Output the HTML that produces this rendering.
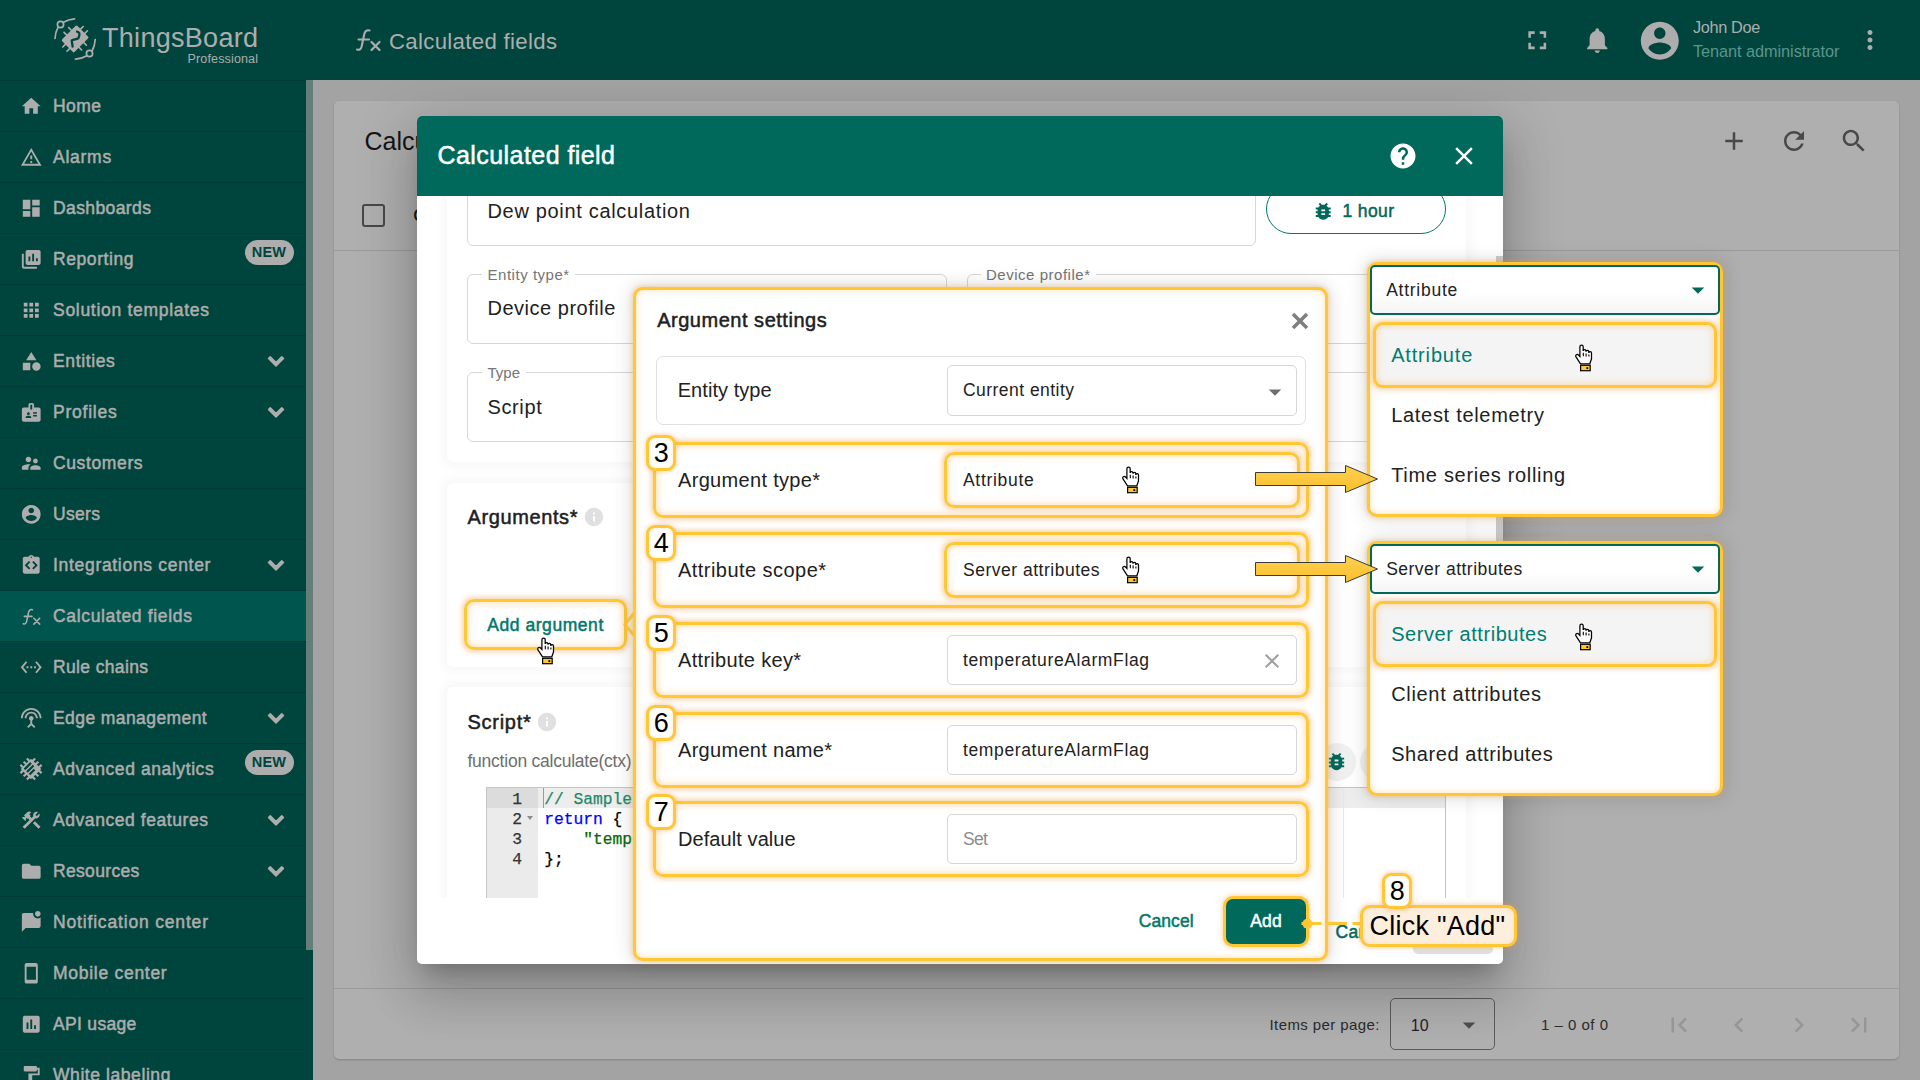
<!DOCTYPE html><html><head><meta charset="utf-8"><title>Calculated fields</title>
<style>
*{box-sizing:border-box;margin:0;padding:0}
html,body{width:1920px;height:1080px;overflow:hidden;background:#a3a3a3;font-family:"Liberation Sans",sans-serif;color:#212121}
.a{position:absolute}
.t{position:absolute;white-space:nowrap;line-height:40px}
.m{-webkit-text-stroke:.5px currentColor}
svg{position:absolute;display:block}
#top{left:0;top:0;width:1920px;height:80px;background:#00453d}
#side{left:0;top:80px;width:313px;height:1000px;background:#00453d;overflow:hidden}
.mi{position:absolute;left:0;width:306px;height:51px;border-top:1px solid #003c35}
.mi.act{background:#00554e}
.new{position:absolute;left:244.500px;top:5.600px;width:49px;height:25px;border-radius:13px;background:#adadad;color:#00453d;font-size:14.500px;font-weight:700;text-align:center;line-height:25.500px;letter-spacing:.2px}
#card{left:334px;top:101px;width:1565px;height:958px;background:#afafaf;border-radius:5px;box-shadow:0 1px 2px rgba(0,0,0,.2)}
#dlgsh{left:417px;top:116px;width:1086px;height:848px;border-radius:5px;box-shadow:0 14px 19px -9px rgba(0,0,0,.2),0 30px 48px 4px rgba(0,0,0,.14),0 11px 58px 10px rgba(0,0,0,.12)}
#dlg{left:417px;top:116px;width:1086px;height:848px;border-radius:5px;background:#fff;overflow:hidden}
#dh{left:0;top:0;width:1086px;height:80px;background:#00695c}
#dc{left:0;top:80px;width:1086px;height:702px;overflow:hidden;background:#fff}
.sec{position:absolute;left:30px;width:1019px;background:#fff;border-radius:6px;box-shadow:0 0 9px 6px rgba(0,0,0,.028)}
.of{position:absolute;border:1px solid #d6d6d6;border-radius:6px;background:#fff}
.lbl{position:absolute;white-space:nowrap;line-height:1;transform:translateY(-50%);font-size:15px;color:#757575;background:#fff;padding:0 6px}
.hl{position:absolute;border:3px solid #ffc733;border-radius:10px;box-shadow:0 0 5px 1.500px rgba(238,170,90,.5),inset 0 0 6px 1.500px rgba(255,194,115,.5)}
.badge{position:absolute;width:30px;height:36px;border:3px solid #ffc733;border-radius:9px;background:#fff;box-shadow:0 0 4px 1px rgba(232,165,85,.45),inset 0 0 3px rgba(255,194,115,.4)}
.badge span{position:absolute;left:0;width:24px;top:-5px;text-align:center;font-size:27px;line-height:40px;color:#000}

.panel{box-shadow:0 0 5px 1px rgba(232,165,85,.45),inset 0 0 6px 1px rgba(255,194,115,.42),0 0 18px 4px rgba(0,0,0,.10)}

</style></head><body>
<div class="a" id="top"></div>
<svg style="left:52px;top:16px;width:46px;height:46px" viewBox="0 0 46 46" fill="none" stroke="#adadad" stroke-width="1.700" stroke-linecap="round">
<path d="M3 22.500C3.300 18.500 4.300 14.500 5.900 11.700M11.500 6.200C14.500 4.300 18.500 3.100 22.500 2.800"></path>
<circle cx="8.500" cy="8.500" r="3.100"></circle>
<path d="M43.200 23.500C42.900 27.500 42 31.500 40.300 34.500M34.300 40C31.500 41.700 27.500 42.900 23.500 43.200"></path>
<circle cx="37.500" cy="37.500" r="3.100"></circle>
<g transform="rotate(45 23.100 22.900)" stroke-width="1.600">
<rect x="14.250" y="12.050" width="17.700" height="21.700" rx="1.500" fill="#adadad" stroke="none"></rect>
<path d="M10.600 19.400h3.700M10.600 26.100h3.700M31.900 19.400h3.700M31.900 26.100h3.700M20.100 8.400v3.700M26.100 8.400v3.700M20.100 33.700v3.700M26.100 33.700v3.700"></path>
</g>
<path d="M25 15.600C27 16 27.800 17.500 27.300 19.200C27 20.500 26.800 21.500 26.300 22.300C24.500 23.500 21.500 23.300 19.700 24.500C20 26.500 20.300 28.500 20.600 30.500" stroke="#00453d" stroke-width="2.300" stroke-linejoin="round"></path>
</svg>
<span class="t " style="left: 102px; top: 18px; font-size: 27px; color: rgb(173, 173, 173); letter-spacing: 0.291px;">ThingsBoard</span>
<span class="t " style="left: 187.5px; top: 39px; font-size: 12.5px; color: rgb(173, 173, 173); letter-spacing: 0.155px;">Professional</span>
<svg style="left:354px;top:27px;width:28px;height:26px" viewBox="0 0 28 26" fill="none" stroke="#adadad" stroke-width="2.100" stroke-linecap="round"><path d="M3 22.500c2.300.9 4-.3 4.700-3.200L10.300 7c.7-3 2.500-4.400 5.300-3.500M4.500 12.500h10.500"></path><path d="M17.500 15l8 8M25.500 15l-8 8" stroke-width="2.200"></path></svg>
<span class="t " style="left: 389px; top: 22px; font-size: 22.2px; color: rgb(173, 173, 173); letter-spacing: 0.324px;">Calculated fields</span>
<svg style="left:1522.15px;top:24.65px;width:30.5px;height:30.5px;fill:#adadad;" viewBox="0 0 24 24"><path d="M7 14H5v5h5v-2H7v-3zm-2-4h2V7h3V5H5v5zm12 7h-3v2h5v-5h-2v3zM14 5v2h3v3h2V5h-5z"></path></svg>
<svg style="left:1582.05px;top:25.05px;width:30.5px;height:30.5px;fill:#adadad;" viewBox="0 0 24 24"><path d="M12 22c1.100 0 2-.9 2-2h-4c0 1.100.89 2 2 2zm6-6v-5c0-3.070-1.640-5.640-4.500-6.320V4c0-.83-.67-1.500-1.500-1.500s-1.500.67-1.500 1.500v.68C7.630 5.360 6 7.920 6 11v5l-2 2v1h16v-1l-2-2z"></path></svg>
<svg style="left:1637.20px;top:17.70px;width:45.6px;height:45.6px;fill:#adadad;" viewBox="0 0 24 24"><path d="M12 2C6.48 2 2 6.48 2 12s4.48 10 10 10 10-4.48 10-10S17.52 2 12 2zm0 3c1.66 0 3 1.34 3 3s-1.34 3-3 3-3-1.34-3-3 1.34-3 3-3zm0 14.2c-2.5 0-4.71-1.28-6-3.22.03-1.99 4-3.080 6-3.080 1.99 0 5.97 1.09 6 3.080-1.290 1.940-3.5 3.220-6 3.220z"></path></svg>
<span class="t " style="left: 1693px; top: 7px; font-size: 16.3px; color: rgb(173, 173, 173); letter-spacing: -0.343px;">John Doe</span>
<span class="t " style="left: 1693px; top: 31px; font-size: 16.3px; color: rgb(91, 149, 140); letter-spacing: -0.053px;">Tenant administrator</span>
<svg style="left:1854.70px;top:25.20px;width:30px;height:30px;fill:#adadad;" viewBox="0 0 24 24"><path d="M12 8c1.100 0 2-.9 2-2s-.9-2-2-2-2 .9-2 2 .9 2 2 2zm0 2c-1.100 0-2 .9-2 2s.9 2 2 2 2-.9 2-2-.9-2-2-2zm0 6c-1.100 0-2 .9-2 2s.9 2 2 2 2-.9 2-2-.9-2-2-2z"></path></svg>
<div class="a" id="side">
<div class="mi" style="top:0px">
<svg style="left:19.95px;top:14.05px;width:22.5px;height:22.5px;fill:#adadad;" viewBox="0 0 24 24"><path d="M10 20v-6h4v6h5v-8h3L12 3 2 12h3v8z"></path></svg>
<span class="t m" style="left: 53px; top: 5px; font-size: 17.5px; color: rgb(173, 173, 173); letter-spacing: 0.438px;">Home</span>
</div>
<div class="mi" style="top:51px">
<svg style="left:19.95px;top:14.05px;width:22.5px;height:22.5px;fill:#adadad;" viewBox="0 0 24 24"><path d="M12 5.99L19.53 19H4.47L12 5.99M12 2L1 21h22L12 2zm1 14h-2v2h2v-2zm0-6h-2v4h2v-4z"></path></svg>
<span class="t m" style="left: 53px; top: 5px; font-size: 17.5px; color: rgb(173, 173, 173); letter-spacing: 0.749px;">Alarms</span>
</div>
<div class="mi" style="top:102px">
<svg style="left:19.95px;top:14.05px;width:22.5px;height:22.5px;fill:#adadad;" viewBox="0 0 24 24"><path d="M3 13h8V3H3v10zm0 8h8v-6H3v6zm10 0h8V11h-8v10zm0-18v6h8V3h-8z"></path></svg>
<span class="t m" style="left: 53px; top: 5px; font-size: 17.5px; color: rgb(173, 173, 173); letter-spacing: 0.403px;">Dashboards</span>
</div>
<div class="mi" style="top:153px">
<svg style="left:19.95px;top:14.05px;width:22.5px;height:22.5px;fill:#adadad;" viewBox="0 0 24 24"><path d="M4 6H2v14c0 1.1.9 2 2 2h14v-2H4V6zm16-4H8c-1.1 0-2 .9-2 2v12c0 1.1.9 2 2 2h12c1.1 0 2-.9 2-2V4c0-1.1-.9-2-2-2zm-9 12H9V9h2v5zm4 0h-2V6h2v8zm4 0h-2v-3h2v3z"></path></svg>
<span class="t m" style="left: 53px; top: 5px; font-size: 17.5px; color: rgb(173, 173, 173); letter-spacing: 0.589px;">Reporting</span>
<div class="new"><span>NEW</span></div>
</div>
<div class="mi" style="top:204px">
<svg style="left:19.95px;top:14.05px;width:22.5px;height:22.5px;fill:#adadad;" viewBox="0 0 24 24"><path d="M4 8h4V4H4v4zm6 12h4v-4h-4v4zm-6 0h4v-4H4v4zm0-6h4v-4H4v4zm6 0h4v-4h-4v4zm6-10v4h4V4h-4zm-6 4h4V4h-4v4zm6 6h4v-4h-4v4zm0 6h4v-4h-4v4z"></path></svg>
<span class="t m" style="left: 53px; top: 5px; font-size: 17.5px; color: rgb(173, 173, 173); letter-spacing: 0.707px;">Solution templates</span>
</div>
<div class="mi" style="top:255px">
<svg style="left:19.95px;top:14.05px;width:22.5px;height:22.5px;fill:#adadad;" viewBox="0 0 24 24"><path d="M12 2l-5.5 9h11L12 2zm5.5 11c-2.49 0-4.5 2.01-4.5 4.5s2.01 4.5 4.5 4.5 4.5-2.01 4.5-4.5-2.01-4.5-4.5-4.5zM3 21.5h8v-8H3v8z"></path></svg>
<span class="t m" style="left: 53px; top: 5px; font-size: 17.5px; color: rgb(173, 173, 173); letter-spacing: 0.63px;">Entities</span>
<svg style="left:261.00px;top:10.10px;width:30px;height:30px;fill:#adadad;stroke:#adadad;stroke-width:1.2;stroke-linejoin:round" viewBox="0 0 24 24"><path d="M16.590 8.590L12 13.170 7.410 8.590 6 10l6 6 6-6z"></path></svg>
</div>
<div class="mi" style="top:306px">
<svg style="left:19.95px;top:14.05px;width:22.5px;height:22.5px;fill:#adadad;" viewBox="0 0 24 24"><path d="M20 7h-5V4c0-1.1-.9-2-2-2h-2c-1.1 0-2 .9-2 2v3H4c-1.1 0-2 .9-2 2v11c0 1.1.9 2 2 2h16c1.1 0 2-.9 2-2V9c0-1.1-.9-2-2-2zM9 12c.83 0 1.5.67 1.5 1.5S9.83 15 9 15s-1.5-.67-1.5-1.5S8.17 12 9 12zm3 6H6v-.75c0-1 2-1.5 3-1.5s3 .5 3 1.5V18zm1-9h-2V4h2v5zm5 7.5h-4V15h4v1.5zm0-3h-4V12h4v1.5z"></path></svg>
<span class="t m" style="left: 53px; top: 5px; font-size: 17.5px; color: rgb(173, 173, 173); letter-spacing: 0.763px;">Profiles</span>
<svg style="left:261.00px;top:10.10px;width:30px;height:30px;fill:#adadad;stroke:#adadad;stroke-width:1.2;stroke-linejoin:round" viewBox="0 0 24 24"><path d="M16.590 8.590L12 13.170 7.410 8.590 6 10l6 6 6-6z"></path></svg>
</div>
<div class="mi" style="top:357px">
<svg style="left:19.95px;top:14.05px;width:22.5px;height:22.5px;fill:#adadad;" viewBox="0 0 24 24"><path d="M16.5 12c1.38 0 2.49-1.12 2.49-2.5S17.880 7 16.5 7C15.12 7 14 8.12 14 9.5s1.120 2.5 2.5 2.5zM9 11c1.66 0 2.99-1.34 2.99-3S10.660 5 9 5C7.34 5 6 6.34 6 8s1.34 3 3 3zm7.5 3c-1.830 0-5.500.92-5.500 2.75V19h11v-2.250c0-1.830-3.670-2.750-5.5-2.750zM9 13c-2.33 0-7 1.17-7 3.5V19h7v-2.25c0-.85.33-2.34 2.370-3.470C10.5 13.1 9.66 13 9 13z"></path></svg>
<span class="t m" style="left: 53px; top: 5px; font-size: 17.5px; color: rgb(173, 173, 173); letter-spacing: 0.624px;">Customers</span>
</div>
<div class="mi" style="top:408px">
<svg style="left:19.95px;top:14.05px;width:22.5px;height:22.5px;fill:#adadad;" viewBox="0 0 24 24"><path d="M12 2C6.48 2 2 6.48 2 12s4.48 10 10 10 10-4.48 10-10S17.52 2 12 2zm0 3c1.66 0 3 1.34 3 3s-1.34 3-3 3-3-1.34-3-3 1.34-3 3-3zm0 14.2c-2.5 0-4.71-1.28-6-3.22.03-1.99 4-3.080 6-3.080 1.99 0 5.97 1.09 6 3.080-1.290 1.940-3.5 3.220-6 3.220z"></path></svg>
<span class="t m" style="left: 53px; top: 5px; font-size: 17.5px; color: rgb(173, 173, 173); letter-spacing: 0.324px;">Users</span>
</div>
<div class="mi" style="top:459px">
<svg style="left:19.95px;top:14.05px;width:22.5px;height:22.5px;fill:#adadad;" viewBox="0 0 24 24"><path d="M19 3h-4.180C14.4 1.84 13.3 1 12 1s-2.4.84-2.820 2H5c-1.100 0-2 .9-2 2v14c0 1.100.9 2 2 2h14c1.100 0 2-.9 2-2V5c0-1.100-.9-2-2-2zm-7-.25c.41 0 .75.34.75.75s-.34.75-.75.75-.75-.34-.75-.75.34-.75.75-.75zM11 15.170l-1.410 1.420L5 12l4.590-4.590L11 8.830 7.830 12 11 15.170zm3.410 1.420L13 15.170 16.170 12 13 8.830l1.410-1.420L19 12l-4.590 4.590z"></path></svg>
<span class="t m" style="left: 53px; top: 5px; font-size: 17.5px; color: rgb(173, 173, 173); letter-spacing: 0.691px;">Integrations center</span>
<svg style="left:261.00px;top:10.10px;width:30px;height:30px;fill:#adadad;stroke:#adadad;stroke-width:1.2;stroke-linejoin:round" viewBox="0 0 24 24"><path d="M16.590 8.590L12 13.170 7.410 8.590 6 10l6 6 6-6z"></path></svg>
</div>
<div class="mi act" style="top:510px">
<svg style="left:20.800px;top:15.500px;width:20.500px;height:19.500px" viewBox="0 0 28 26" fill="none" stroke="#adadad" stroke-width="2.100" stroke-linecap="round"><path d="M3 22.500c2.300.9 4-.3 4.700-3.200L10.300 7c.7-3 2.500-4.400 5.300-3.500M4.500 12.500h10.500"></path><path d="M17.500 15l8 8M25.500 15l-8 8" stroke-width="2.200"></path></svg>
<span class="t m" style="left: 53px; top: 5px; font-size: 17.5px; color: rgb(173, 173, 173); letter-spacing: 0.656px;">Calculated fields</span>
</div>
<div class="mi" style="top:561px">
<svg style="left:19.95px;top:14.05px;width:22.5px;height:22.5px;fill:#adadad;" viewBox="0 0 24 24"><path d="M7.770 6.760L6.230 5.480.82 12l5.410 6.520 1.540-1.280L3.420 12l4.350-5.240zM7 13h2v-2H7v2zm10-2h-2v2h2v-2zm-6 2h2v-2h-2v2zm6.770-7.520l-1.540 1.280L20.580 12l-4.350 5.240 1.540 1.280L23.180 12l-5.410-6.520z"></path></svg>
<span class="t m" style="left: 53px; top: 5px; font-size: 17.5px; color: rgb(173, 173, 173); letter-spacing: 0.355px;">Rule chains</span>
</div>
<div class="mi" style="top:612px">
<svg style="left:19.95px;top:14.05px;width:22.5px;height:22.5px;fill:#adadad;" viewBox="0 0 24 24"><path d="M12 5c-3.870 0-7 3.130-7 7h2c0-2.760 2.240-5 5-5s5 2.240 5 5h2c0-3.870-3.130-7-7-7zm1 9.290c.88-.39 1.500-1.260 1.500-2.290 0-1.380-1.120-2.500-2.500-2.500S9.500 10.620 9.500 12c0 1.020.62 1.900 1.500 2.290v3.300L7.590 21 9 22.410l3-3 3 3L16.410 21 13 17.590v-3.300zM12 1C5.930 1 1 5.930 1 12h2c0-4.970 4.030-9 9-9s9 4.030 9 9h2c0-6.070-4.930-11-11-11z"></path></svg>
<span class="t m" style="left: 53px; top: 5px; font-size: 17.5px; color: rgb(173, 173, 173); letter-spacing: 0.415px;">Edge management</span>
<svg style="left:261.00px;top:10.10px;width:30px;height:30px;fill:#adadad;stroke:#adadad;stroke-width:1.2;stroke-linejoin:round" viewBox="0 0 24 24"><path d="M16.590 8.590L12 13.170 7.410 8.590 6 10l6 6 6-6z"></path></svg>
</div>
<div class="mi" style="top:663px">
<svg style="left:18.100px;top:12px;width:26px;height:26px" viewBox="0 0 24 24" fill="none" stroke="#adadad" stroke-width="2">
<g transform="rotate(45 12 12)"><rect x="5.300" y="5.300" width="13.400" height="13.400" rx=".6" fill="#adadad" stroke="none"></rect>
<path d="M7.800 2.400v3.500M12 2.400v3.500M16.200 2.400v3.500M7.800 18.100v3.500M12 18.100v3.500M16.200 18.100v3.500M2.400 7.800h3.500M2.400 12h3.500M2.400 16.200h3.500M18.100 7.800h3.500M18.100 12h3.500M18.100 16.200h3.500"></path>
<path d="M8 8v8.500M11.300 8v8.500M14.600 10v6.500" stroke="#00453d" stroke-width="2"></path></g></svg>
<span class="t m" style="left: 53px; top: 5px; font-size: 17.5px; color: rgb(173, 173, 173); letter-spacing: 0.583px;">Advanced analytics</span>
<div class="new"><span>NEW</span></div>
</div>
<div class="mi" style="top:714px">
<svg style="left:19.95px;top:14.05px;width:22.5px;height:22.5px;fill:#adadad;" viewBox="0 0 24 24"><path d="M13.783 15.172l2.121-2.121 5.996 5.996-2.121 2.121zM17.5 10c1.930 0 3.500-1.570 3.500-3.500 0-.58-.16-1.120-.41-1.600l-2.700 2.700-1.490-1.490 2.700-2.700c-.48-.25-1.020-.41-1.600-.41C15.570 3 14 4.570 14 6.500c0 .41.08.8.21 1.160l-1.850 1.850-1.780-1.780.71-.71-1.410-1.410L12 3.490c-1.170-1.170-3.070-1.170-4.240 0L4.220 7.030l1.410 1.410H2.810l-.71.71 3.540 3.540.71-.71V9.150l1.410 1.410.71-.71 1.780 1.780-7.410 7.410 2.120 2.120L16.340 9.790c.36.130.75.210 1.160.210z"></path></svg>
<span class="t m" style="left: 53px; top: 5px; font-size: 17.5px; color: rgb(173, 173, 173); letter-spacing: 0.566px;">Advanced features</span>
<svg style="left:261.00px;top:10.10px;width:30px;height:30px;fill:#adadad;stroke:#adadad;stroke-width:1.2;stroke-linejoin:round" viewBox="0 0 24 24"><path d="M16.590 8.590L12 13.170 7.410 8.590 6 10l6 6 6-6z"></path></svg>
</div>
<div class="mi" style="top:765px">
<svg style="left:19.95px;top:14.05px;width:22.5px;height:22.5px;fill:#adadad;" viewBox="0 0 24 24"><path d="M10 4H4c-1.100 0-1.990.9-1.990 2L2 18c0 1.100.9 2 2 2h16c1.100 0 2-.9 2-2V8c0-1.100-.9-2-2-2h-8l-2-2z"></path></svg>
<span class="t m" style="left: 53px; top: 5px; font-size: 17.5px; color: rgb(173, 173, 173); letter-spacing: 0.33px;">Resources</span>
<svg style="left:261.00px;top:10.10px;width:30px;height:30px;fill:#adadad;stroke:#adadad;stroke-width:1.2;stroke-linejoin:round" viewBox="0 0 24 24"><path d="M16.590 8.590L12 13.170 7.410 8.590 6 10l6 6 6-6z"></path></svg>
</div>
<div class="mi" style="top:816px">
<svg style="left:19.95px;top:14.05px;width:22.5px;height:22.5px;fill:#adadad;" viewBox="0 0 24 24"><path d="M22 6.980V16c0 1.100-.9 2-2 2H6l-4 4V4c0-1.100.9-2 2-2h10.100c-.06.32-.1.66-.1 1 0 2.760 2.240 5 5 5 1.130 0 2.160-.39 3-1.020zM16 3c0 1.660 1.340 3 3 3s3-1.340 3-3-1.340-3-3-3-3 1.340-3 3z"></path></svg>
<span class="t m" style="left: 53px; top: 5px; font-size: 17.5px; color: rgb(173, 173, 173); letter-spacing: 0.829px;">Notification center</span>
</div>
<div class="mi" style="top:867px">
<svg style="left:19.95px;top:14.05px;width:22.5px;height:22.5px;fill:#adadad;" viewBox="0 0 24 24"><path d="M17 1.010L7 1c-1.100 0-2 .9-2 2v18c0 1.100.9 2 2 2h10c1.100 0 2-.9 2-2V3c0-1.100-.9-1.990-2-1.990zM17 19H7V5h10v14z"></path></svg>
<span class="t m" style="left: 53px; top: 5px; font-size: 17.5px; color: rgb(173, 173, 173); letter-spacing: 0.72px;">Mobile center</span>
</div>
<div class="mi" style="top:918px">
<svg style="left:19.95px;top:14.05px;width:22.5px;height:22.5px;fill:#adadad;" viewBox="0 0 24 24"><path d="M19 3H5c-1.100 0-2 .9-2 2v14c0 1.100.9 2 2 2h14c1.100 0 2-.9 2-2V5c0-1.100-.9-2-2-2zM9 17H7v-7h2v7zm4 0h-2V7h2v10zm4 0h-2v-4h2v4z"></path></svg>
<span class="t m" style="left: 53px; top: 5px; font-size: 17.5px; color: rgb(173, 173, 173); letter-spacing: 0.319px;">API usage</span>
</div>
<div class="mi" style="top:969px">
<svg style="left:19.95px;top:14.05px;width:22.5px;height:22.5px;fill:#adadad;" viewBox="0 0 24 24"><path d="M18 4V3c0-.55-.45-1-1-1H5c-.55 0-1 .45-1 1v4c0 .55.45 1 1 1h12c.55 0 1-.45 1-1V6h1v4H9v11c0 .55.45 1 1 1h2c.55 0 1-.45 1-1v-9h8V4h-3z"></path></svg>
<span class="t m" style="left: 53px; top: 5px; font-size: 17.5px; color: rgb(173, 173, 173); letter-spacing: 0.575px;">White labeling</span>
</div>
<div class="a" style="left:306px;top:0;width:7px;height:870px;background:#667e7a"></div>
</div>
<div class="a" id="card"></div>
<span class="t " style="left:364.5px;top:121px;font-size:25px;color:#141414;">Calcu</span>
<div class="a" style="left:362px;top:204px;width:23px;height:23px;border:2.500px solid #484848;border-radius:3px"></div>
<span class="t m" style="left:413.5px;top:196px;font-size:16px;color:#141414;">C</span>
<div class="a" style="left:334px;top:250px;width:1565px;height:1px;background:#9a9a9a"></div>
<svg style="left:1719.20px;top:126.00px;width:30px;height:30px;fill:#484848;" viewBox="0 0 24 24"><path d="M19 13h-6v6h-2v-6H5v-2h6V5h2v6h6v2z"></path></svg>
<svg style="left:1779.00px;top:126.00px;width:30px;height:30px;fill:#484848;" viewBox="0 0 24 24"><path d="M17.650 6.350C16.200 4.900 14.210 4 12 4c-4.420 0-7.990 3.580-7.990 8s3.570 8 7.990 8c3.730 0 6.840-2.550 7.730-6h-2.080c-.82 2.330-3.040 4-5.650 4-3.310 0-6-2.690-6-6s2.690-6 6-6c1.660 0 3.140.69 4.220 1.780L13 11h7V4l-2.350 2.350z"></path></svg>
<svg style="left:1839.00px;top:126.00px;width:30px;height:30px;fill:#484848;" viewBox="0 0 24 24"><path d="M15.500 14h-.79l-.28-.27C15.410 12.590 16 11.110 16 9.500 16 5.910 13.090 3 9.500 3S3 5.910 3 9.500 5.910 16 9.500 16c1.610 0 3.090-.59 4.230-1.570l.27.28v.79l5 4.990L20.490 19l-4.990-5zm-6 0C7.010 14 5 11.990 5 9.500S7.010 5 9.500 5 14 7.010 14 9.500 11.990 14 9.500 14z"></path></svg>
<div class="a" style="left:334px;top:988px;width:1565px;height:1px;background:#9a9a9a"></div>
<span class="t " style="left: 1269.5px; top: 1005px; font-size: 15px; color: rgb(43, 43, 43); letter-spacing: 0.412px;">Items per page:</span>
<div class="a" style="left:1390px;top:998px;width:105px;height:52px;border:1px solid #5c5c5c;border-radius:5px"></div>
<span class="t " style="left:1410.8px;top:1006px;font-size:16px;color:#1f1f1f;">10</span>
<svg style="left:1454.00px;top:1010.00px;width:30px;height:30px;fill:#4e4e4e;" viewBox="0 0 24 24"><path d="M7 10l5 5 5-5z"></path></svg>
<span class="t " style="left: 1541px; top: 1005px; font-size: 15px; color: rgb(43, 43, 43); letter-spacing: 0.493px;">1 – 0 of 0</span>
<svg style="left:1664.00px;top:1009.50px;width:30px;height:30px;fill:#969696;" viewBox="0 0 24 24"><path d="M18.410 16.590L13.820 12l4.590-4.590L17 6l-6 6 6 6zM6 6h2v12H6z"></path></svg>
<svg style="left:1724.30px;top:1009.50px;width:30px;height:30px;fill:#969696;" viewBox="0 0 24 24"><path d="M15.410 7.410L14 6l-6 6 6 6 1.410-1.410L10.830 12z"></path></svg>
<svg style="left:1783.80px;top:1009.50px;width:30px;height:30px;fill:#969696;" viewBox="0 0 24 24"><path d="M10 6L8.590 7.410 13.170 12l-4.580 4.590L10 18l6-6z"></path></svg>
<svg style="left:1843.60px;top:1009.50px;width:30px;height:30px;fill:#969696;" viewBox="0 0 24 24"><path d="M5.590 7.410L10.180 12l-4.590 4.590L7 18l6-6-6-6zM16 6h2v12h-2z"></path></svg>
<div class="a" id="dlgsh"></div>
<div class="a" id="dlg"><div class="a" style="left:-417px;top:-116px;width:1920px;height:1080px">
<div class="a" style="left:417px;top:196px;width:1086px;height:702px;overflow:hidden;background:#fff"><div class="a" style="left:-417px;top:-196px;width:1920px;height:1080px">
<div class="sec" style="left:447px;top:150px;width:1019px;height:312px"></div>
<div class="sec" style="left:447px;top:482.500px;width:1019px;height:184.500px"></div>
<div class="sec" style="left:447px;top:687px;width:1019px;height:260px"></div>
<div class="of" style="left:467px;top:177px;width:789px;height:68.700px"></div>
<span class="t " style="left: 487.5px; top: 191px; font-size: 20px; color: rgb(33, 33, 33); letter-spacing: 0.675px;">Dew point calculation</span>
<div class="a" style="left:1266px;top:183.500px;width:180px;height:50px;border:1px solid #00796b;border-radius:25px"></div>
<svg style="left:1311.75px;top:199.75px;width:22.5px;height:22.5px;fill:#00695c;" viewBox="0 0 24 24"><path d="M20 8h-2.810c-.45-.78-1.070-1.450-1.820-1.960L17 4.410 15.590 3l-2.170 2.170C12.960 5.060 12.490 5 12 5c-.49 0-.96.06-1.410.17L8.410 3 7 4.410l1.620 1.630C7.880 6.550 7.260 7.220 6.810 8H4v2h2.090c-.05.33-.09.66-.09 1v1H4v2h2v1c0 .34.04.67.09 1H4v2h2.810c1.040 1.790 2.970 3 5.190 3s4.150-1.210 5.190-3H20v-2h-2.090c.05-.33.09-.66.09-1v-1h2v-2h-2v-1c0-.34-.04-.67-.09-1H20V8zm-6 8h-4v-2h4v2zm0-4h-4v-2h4v2z"></path></svg>
<span class="t m" style="left: 1342.4px; top: 191px; font-size: 17.5px; color: rgb(0, 105, 92); letter-spacing: 0.395px;">1 hour</span>
<div class="of" style="left:467px;top:273.700px;width:480px;height:70px"></div>
<div class="a" style="left:482px;top:270px;width:92.500px;height:10px;background:#fff"></div>
<span class="t " style="left: 487.5px; top: 255px; font-size: 15px; color: rgb(117, 117, 117); letter-spacing: 0.53px;">Entity type*</span>
<span class="t " style="left: 487.5px; top: 288px; font-size: 20px; color: rgb(33, 33, 33); letter-spacing: 0.51px;">Device profile</span>
<div class="of" style="left:967px;top:273.700px;width:479px;height:70px"></div>
<div class="a" style="left:981px;top:270px;width:115px;height:10px;background:#fff"></div>
<span class="t " style="left: 986px; top: 255px; font-size: 15px; color: rgb(117, 117, 117); letter-spacing: 0.52px;">Device profile*</span>
<div class="of" style="left:467px;top:372px;width:979px;height:69.500px"></div>
<div class="a" style="left:482px;top:368px;width:44px;height:10px;background:#fff"></div>
<span class="t " style="left: 487.5px; top: 353px; font-size: 15px; color: rgb(117, 117, 117); letter-spacing: -0.01px;">Type</span>
<span class="t " style="left: 487.5px; top: 387px; font-size: 20px; color: rgb(33, 33, 33); letter-spacing: 0.615px;">Script</span>
<span class="t m" style="left: 467.5px; top: 497px; font-size: 20px; color: rgb(33, 33, 33); letter-spacing: 0.611px;">Arguments*</span>
<svg style="left:583.20px;top:505.70px;width:22px;height:22px;fill:#e0e0e0;" viewBox="0 0 24 24"><path d="M12 2C6.480 2 2 6.480 2 12s4.480 10 10 10 10-4.480 10-10S17.520 2 12 2zm1 15h-2v-6h2v6zm0-8h-2V7h2v2z"></path></svg>
<span class="t m" style="left: 487.2px; top: 605px; font-size: 17.5px; color: rgb(0, 121, 107); letter-spacing: 0.56px;">Add argument</span>
<span class="t m" style="left: 467.5px; top: 702px; font-size: 20px; color: rgb(33, 33, 33); letter-spacing: 0.732px;">Script*</span>
<svg style="left:536.20px;top:710.70px;width:22px;height:22px;fill:#e0e0e0;" viewBox="0 0 24 24"><path d="M12 2C6.480 2 2 6.480 2 12s4.480 10 10 10 10-4.480 10-10S17.520 2 12 2zm1 15h-2v-6h2v6zm0-8h-2V7h2v2z"></path></svg>
<span class="t " style="left: 467.5px; top: 741px; font-size: 17.5px; color: rgb(110, 110, 110); letter-spacing: -0.239px;">function calculate(ctx)</span>
<div class="a" style="left:1317.500px;top:742.500px;width:38px;height:38px;border-radius:19px;background:#f1f1f1"></div>
<svg style="left:1325.00px;top:750.00px;width:23px;height:23px;fill:#00695c;" viewBox="0 0 24 24"><path d="M20 8h-2.810c-.45-.78-1.070-1.450-1.820-1.960L17 4.410 15.590 3l-2.170 2.170C12.960 5.060 12.490 5 12 5c-.49 0-.96.06-1.410.17L8.410 3 7 4.410l1.620 1.630C7.880 6.550 7.260 7.220 6.810 8H4v2h2.090c-.05.33-.09.66-.09 1v1H4v2h2v1c0 .34.04.67.09 1H4v2h2.810c1.040 1.790 2.970 3 5.190 3s4.150-1.210 5.190-3H20v-2h-2.090c.05-.33.09-.66.09-1v-1h2v-2h-2v-1c0-.34-.04-.67-.09-1H20V8zm-6 8h-4v-2h4v2zm0-4h-4v-2h4v2z"></path></svg>
<div class="a" style="left:1360px;top:742.500px;width:38px;height:38px;border-radius:19px;background:#f1f1f1"></div>
<div class="a" style="left:486px;top:787px;width:960px;height:200px;border:1px solid #c4c4c4;background:#fff"></div>
<div class="a" style="left:487px;top:788px;width:51px;height:199px;background:#ebebeb"></div>
<div class="a" style="left:487px;top:788px;width:51px;height:20px;background:#dcdcdc"></div>
<div class="a" style="left:538px;top:788px;width:907px;height:20px;background:#ededed"></div>
<div class="a" style="left:543px;top:788px;width:1px;height:20px;background:#9a9a9a"></div>
<div class="a" style="left:1343px;top:788px;width:1px;height:199px;background:#e8e8e8"></div>
<span class="t " style="left:487px;top:780px;font-size:16.3px;color:#333;width:35px;text-align:right;-webkit-text-stroke:.25px #333;font-family:'Liberation Mono',monospace;">1</span>
<span class="t " style="left:544.2px;top:780px;font-size:16.3px;color:#000;white-space:pre;-webkit-text-stroke:.25px;font-family:'Liberation Mono',monospace;"><span style="color:#1d8a68">// Sample script</span></span>
<span class="t " style="left:487px;top:800px;font-size:16.3px;color:#333;width:35px;text-align:right;-webkit-text-stroke:.25px #333;font-family:'Liberation Mono',monospace;">2</span>
<span class="t " style="left:544.2px;top:800px;font-size:16.3px;color:#000;white-space:pre;-webkit-text-stroke:.25px;font-family:'Liberation Mono',monospace;"><span style="color:#0000ff">return</span> {</span>
<span class="t " style="left:487px;top:820px;font-size:16.3px;color:#333;width:35px;text-align:right;-webkit-text-stroke:.25px #333;font-family:'Liberation Mono',monospace;">3</span>
<span class="t " style="left:544.2px;top:820px;font-size:16.3px;color:#000;white-space:pre;-webkit-text-stroke:.25px;font-family:'Liberation Mono',monospace;">    <span style="color:#036a07">"temperature"</span></span>
<span class="t " style="left:487px;top:840px;font-size:16.3px;color:#333;width:35px;text-align:right;-webkit-text-stroke:.25px #333;font-family:'Liberation Mono',monospace;">4</span>
<span class="t " style="left:544.2px;top:840px;font-size:16.3px;color:#000;white-space:pre;-webkit-text-stroke:.25px;font-family:'Liberation Mono',monospace;">};</span>
<svg style="left:527px;top:816px;width:6px;height:4px;fill:#8c8c8c" viewBox="0 0 6 4"><path d="M0 0h6L3 4z"></path></svg>
</div></div>
<div class="a" style="left:417px;top:116px;width:1086px;height:80px;background:#00695c"></div>
<span class="t m" style="left: 437.5px; top: 135px; font-size: 25px; color: rgb(255, 255, 255); letter-spacing: 0.438px;">Calculated field</span>
<svg style="left:1388.20px;top:140.80px;width:30px;height:30px;fill:#fff;" viewBox="0 0 24 24"><path d="M12 2C6.480 2 2 6.480 2 12s4.480 10 10 10 10-4.480 10-10S17.520 2 12 2zm1 17h-2v-2h2v2zm2.070-7.750l-.9.92C13.450 12.900 13 13.500 13 15h-2v-.5c0-1.100.45-2.100 1.170-2.830l1.240-1.260c.37-.36.590-.86.590-1.410 0-1.100-.9-2-2-2s-2 .9-2 2H8c0-2.210 1.790-4 4-4s4 1.790 4 4c0 .88-.36 1.680-.93 2.250z"></path></svg>
<svg style="left:1448.60px;top:141.00px;width:30px;height:30px;fill:#fff;" viewBox="0 0 24 24"><path d="M19 6.410L17.590 5 12 10.590 6.410 5 5 6.410 10.590 12 5 17.590 6.410 19 12 13.410 17.590 19 19 17.590 13.410 12z"></path></svg>
<div class="a" style="left:1496px;top:256px;width:7px;height:440px;background:#cdcdcd"></div>
<span class="t m" style="left: 1335.5px; top: 912px; font-size: 17.5px; color: rgb(0, 105, 92); letter-spacing: 0.303px;">Cancel</span>
<div class="a" style="left:1413.400px;top:908px;width:79.600px;height:45.700px;border-radius:5px;background:#e0e0e0"></div>
</div></div>
<div class="hl " style="left:464.2px;top:599.2px;width:163.00px;height:50.80px;border-radius:10px;"></div>
<svg style="left:620px;top:604px;width:18px;height:42px" viewBox="0 0 18 42"><path d="M15.800 7L4.800 20.500L15.800 33.500" fill="#fdebd2" stroke="#ffc733" stroke-width="3" stroke-linejoin="round" opacity=".85"></path></svg>
<svg style="left:536.5px;top:636.5px;width:18px;height:28px" viewBox="0 0 18 28">
<path d="M6.600 1c-1 0-1.700.75-1.700 1.700v9.800l-1.400-1.500c-.7-.7-1.700-.75-2.350-.1-.6.65-.5 1.500 0 2.250l4.350 6.650h9.300l1.700-4.800v-6.100c0-.8-.6-1.350-1.350-1.350s-1.350.55-1.350 1.350v-1.100c0-.8-.6-1.350-1.400-1.350s-1.400.55-1.400 1.350v-.9c0-.8-.6-1.350-1.400-1.350s-1.400.55-1.400 1.350V2.700c0-.95-.7-1.700-1.600-1.700z" fill="#fff" stroke="#000" stroke-width="1.250"></path>
<path d="M8.300 8.800v3.400M11.100 9.500v2.900M13.900 10.500v2" stroke="#000" stroke-width="1.100" fill="none"></path>
<rect x="5.600" y="21.300" width="9.600" height="5.400" fill="#ffc733" stroke="#000" stroke-width="1.200"></rect>
<rect x="11.400" y="23.200" width="1.800" height="1.800" fill="#000"></rect></svg>
<div class="hl panel" style="left:633.2px;top:287.2px;width:695.00px;height:674.30px;border-radius:10px;background:#fff;"></div>
<span class="t m" style="left: 657.2px; top: 300px; font-size: 20px; color: rgb(33, 33, 33); letter-spacing: 0.519px;">Argument settings</span>
<svg style="left:1291px;top:312px;width:18px;height:18px" viewBox="0 0 18 18"><path d="M2 2L16 16M16 2L2 16" stroke="#808080" stroke-width="3.600" fill="none"></path></svg>
<div class="of" style="left:656.300px;top:355.500px;width:649.500px;height:69px;border-color:#e0e0e0;border-radius:7px"></div>
<span class="t " style="left: 677.7px; top: 370px; font-size: 20px; color: rgb(33, 33, 33); letter-spacing: 0.061px;">Entity type</span>
<div class="of" style="left:947px;top:365px;width:350px;height:51px;border-radius:5px"></div>
<span class="t " style="left: 963px; top: 370px; font-size: 17.5px; color: rgb(33, 33, 33); letter-spacing: 0.458px;">Current entity</span>
<svg style="left:1260.00px;top:376.50px;width:30px;height:30px;fill:#6e6e6e;" viewBox="0 0 24 24"><path d="M7 10l5 5 5-5z"></path></svg>
<div class="hl " style="left:653.1px;top:441.9px;width:655.65px;height:76.20px;border-radius:10px;"></div>
<span class="t " style="left: 678px; top: 460px; font-size: 20px; color: rgb(33, 33, 33); letter-spacing: 0.319px;">Argument type*</span>
<div class="hl " style="left:944.2px;top:452.0px;width:355.80px;height:56.00px;border-radius:10px;"></div>
<span class="t " style="left: 963px; top: 460px; font-size: 17.5px; color: rgb(33, 33, 33); letter-spacing: 0.702px;">Attribute</span>
<div class="badge" style="left:646.2px;top:435.0px"><span>3</span></div>
<svg style="left:1122px;top:466.4px;width:18px;height:28px" viewBox="0 0 18 28">
<path d="M6.600 1c-1 0-1.700.75-1.700 1.700v9.800l-1.400-1.500c-.7-.7-1.700-.75-2.350-.1-.6.65-.5 1.500 0 2.250l4.350 6.650h9.300l1.700-4.800v-6.100c0-.8-.6-1.350-1.350-1.350s-1.350.55-1.350 1.350v-1.100c0-.8-.6-1.350-1.400-1.350s-1.400.55-1.400 1.350v-.9c0-.8-.6-1.350-1.400-1.350s-1.400.55-1.400 1.350V2.700c0-.95-.7-1.700-1.600-1.700z" fill="#fff" stroke="#000" stroke-width="1.250"></path>
<path d="M8.300 8.800v3.400M11.100 9.500v2.900M13.900 10.500v2" stroke="#000" stroke-width="1.100" fill="none"></path>
<rect x="5.600" y="21.300" width="9.600" height="5.400" fill="#ffc733" stroke="#000" stroke-width="1.200"></rect>
<rect x="11.400" y="23.200" width="1.800" height="1.800" fill="#000"></rect></svg>
<div class="hl " style="left:653.1px;top:531.7px;width:655.65px;height:76.20px;border-radius:10px;"></div>
<span class="t " style="left: 678px; top: 550px; font-size: 20px; color: rgb(33, 33, 33); letter-spacing: 0.453px;">Attribute scope*</span>
<div class="hl " style="left:944.2px;top:541.8000000000001px;width:355.80px;height:56.00px;border-radius:10px;"></div>
<span class="t " style="left: 963px; top: 550px; font-size: 17.5px; color: rgb(33, 33, 33); letter-spacing: 0.507px;">Server attributes</span>
<div class="badge" style="left:646.2px;top:524.8000000000001px"><span>4</span></div>
<svg style="left:1122px;top:556.2px;width:18px;height:28px" viewBox="0 0 18 28">
<path d="M6.600 1c-1 0-1.700.75-1.700 1.700v9.800l-1.400-1.500c-.7-.7-1.700-.75-2.350-.1-.6.65-.5 1.500 0 2.250l4.350 6.650h9.300l1.700-4.800v-6.100c0-.8-.6-1.350-1.350-1.350s-1.350.55-1.350 1.350v-1.100c0-.8-.6-1.350-1.400-1.350s-1.400.55-1.400 1.350v-.9c0-.8-.6-1.350-1.400-1.350s-1.400.55-1.400 1.350V2.700c0-.95-.7-1.700-1.600-1.700z" fill="#fff" stroke="#000" stroke-width="1.250"></path>
<path d="M8.300 8.800v3.400M11.100 9.500v2.900M13.900 10.500v2" stroke="#000" stroke-width="1.100" fill="none"></path>
<rect x="5.600" y="21.300" width="9.600" height="5.400" fill="#ffc733" stroke="#000" stroke-width="1.200"></rect>
<rect x="11.400" y="23.200" width="1.800" height="1.800" fill="#000"></rect></svg>
<div class="hl " style="left:653.1px;top:621.7px;width:655.65px;height:76.20px;border-radius:10px;"></div>
<span class="t " style="left: 678px; top: 640px; font-size: 20px; color: rgb(33, 33, 33); letter-spacing: 0.311px;">Attribute key*</span>
<div class="of" style="left:947px;top:635.0px;width:350px;height:50px;border-radius:5px"></div>
<span class="t " style="left: 963px; top: 640px; font-size: 17.5px; color: rgb(33, 33, 33); letter-spacing: 0.626px;">temperatureAlarmFlag</span>
<div class="badge" style="left:646.2px;top:614.8000000000001px"><span>5</span></div>
<div class="hl " style="left:653.1px;top:712px;width:655.65px;height:76.20px;border-radius:10px;"></div>
<span class="t " style="left: 678px; top: 730px; font-size: 20px; color: rgb(33, 33, 33); letter-spacing: 0.302px;">Argument name*</span>
<div class="of" style="left:947px;top:725.3px;width:350px;height:50px;border-radius:5px"></div>
<span class="t " style="left: 963px; top: 730px; font-size: 17.5px; color: rgb(33, 33, 33); letter-spacing: 0.626px;">temperatureAlarmFlag</span>
<div class="badge" style="left:646.2px;top:705.1px"><span>6</span></div>
<div class="hl " style="left:653.1px;top:800.8px;width:655.65px;height:76.20px;border-radius:10px;"></div>
<span class="t " style="left: 678px; top: 819px; font-size: 20px; color: rgb(33, 33, 33); letter-spacing: 0.079px;">Default value</span>
<div class="of" style="left:947px;top:814.1px;width:350px;height:50px;border-radius:5px"></div>
<span class="t " style="left: 963px; top: 819px; font-size: 17.5px; color: rgb(140, 140, 140); letter-spacing: -0.641px;">Set</span>
<div class="badge" style="left:646.2px;top:793.9px"><span>7</span></div>
<svg style="left:1259.70px;top:648.50px;width:24px;height:24px;fill:#9e9e9e;" viewBox="0 0 24 24"><path d="M19 6.410L17.590 5 12 10.590 6.410 5 5 6.410 10.590 12 5 17.590 6.410 19 12 13.410 17.590 19 19 17.590 13.410 12z"></path></svg>
<span class="t m" style="left: 1138.7px; top: 901px; font-size: 17.5px; color: rgb(0, 121, 107); letter-spacing: 0.103px;">Cancel</span>
<div class="hl " style="left:1223.3px;top:896.3px;width:85.90px;height:50.40px;border-radius:10px;background:#00695c;box-shadow:0 0 5px 1px rgba(232,165,85,.45);"></div>
<span class="t m" style="left: 1250.3px; top: 901px; font-size: 17.5px; color: rgb(255, 255, 255); letter-spacing: 0.13px;">Add</span>
<svg style="left:1300px;top:915px;width:64px;height:18px" viewBox="0 0 64 18"><path d="M1.500 8.500H62" stroke="#ffc733" stroke-width="2.800" stroke-dasharray="20 5.500" fill="none"></path><circle cx="7.500" cy="8.800" r="5" fill="#ffc733"></circle></svg>
<div class="hl " style="left:1360.3px;top:905px;width:156.70px;height:42.00px;border-radius:10px;background:#fdeedd;box-shadow:0 0 5px 1px rgba(232,165,85,.45),inset 0 0 4px rgba(255,194,115,.25);"></div>
<span class="t " style="left: 1369.5px; top: 906px; font-size: 27px; color: rgb(0, 0, 0); letter-spacing: 0.238px;">Click "Add"</span>
<div class="badge" style="left:1382.2px;top:873px"><span>8</span></div>
<div class="hl panel" style="left:1367px;top:262.2px;width:356.00px;height:255.20px;border-radius:10px;background:#fff;"></div>
<div class="a" style="left:1369.800px;top:265.0px;width:350.400px;height:50px;border:2px solid #00695c;border-radius:5px;background:linear-gradient(#fff 55%,#f5f5f5)"></div>
<span class="t " style="left: 1386.2px; top: 270px; font-size: 17.5px; color: rgb(33, 33, 33); letter-spacing: 0.739px;">Attribute</span>
<svg style="left:1683.00px;top:274.70px;width:30px;height:30px;fill:#00695c;" viewBox="0 0 24 24"><path d="M7 10l5 5 5-5z"></path></svg>
<div class="hl " style="left:1373.2px;top:322.2px;width:343.80px;height:65.80px;border-radius:10px;background:#f4f4f4;"></div>
<span class="t " style="left: 1391.2px; top: 335px; font-size: 20px; color: rgb(0, 125, 110); letter-spacing: 0.827px;">Attribute</span>
<span class="t " style="left: 1391.2px; top: 395px; font-size: 20px; color: rgb(33, 33, 33); letter-spacing: 0.7px;">Latest telemetry</span>
<span class="t " style="left: 1391.2px; top: 455px; font-size: 20px; color: rgb(33, 33, 33); letter-spacing: 0.693px;">Time series rolling</span>
<svg style="left:1574.8px;top:343.7px;width:18px;height:28px" viewBox="0 0 18 28">
<path d="M6.600 1c-1 0-1.700.75-1.700 1.700v9.800l-1.400-1.500c-.7-.7-1.700-.75-2.350-.1-.6.65-.5 1.500 0 2.250l4.350 6.650h9.300l1.700-4.800v-6.100c0-.8-.6-1.350-1.350-1.350s-1.350.55-1.350 1.350v-1.100c0-.8-.6-1.350-1.400-1.350s-1.400.55-1.400 1.350v-.9c0-.8-.6-1.350-1.400-1.350s-1.400.55-1.400 1.350V2.700c0-.95-.7-1.700-1.600-1.700z" fill="#fff" stroke="#000" stroke-width="1.250"></path>
<path d="M8.300 8.800v3.400M11.100 9.500v2.900M13.900 10.500v2" stroke="#000" stroke-width="1.100" fill="none"></path>
<rect x="5.600" y="21.300" width="9.600" height="5.400" fill="#ffc733" stroke="#000" stroke-width="1.200"></rect>
<rect x="11.400" y="23.200" width="1.800" height="1.800" fill="#000"></rect></svg>
<div class="hl panel" style="left:1367px;top:541.2px;width:356.00px;height:255.20px;border-radius:10px;background:#fff;"></div>
<div class="a" style="left:1369.800px;top:544.0px;width:350.400px;height:50px;border:2px solid #00695c;border-radius:5px;background:linear-gradient(#fff 55%,#f5f5f5)"></div>
<span class="t " style="left: 1386.2px; top: 549px; font-size: 17.5px; color: rgb(33, 33, 33); letter-spacing: 0.482px;">Server attributes</span>
<svg style="left:1683.00px;top:553.70px;width:30px;height:30px;fill:#00695c;" viewBox="0 0 24 24"><path d="M7 10l5 5 5-5z"></path></svg>
<div class="hl " style="left:1373.2px;top:601.2px;width:343.80px;height:65.80px;border-radius:10px;background:#f4f4f4;"></div>
<span class="t " style="left: 1391.2px; top: 614px; font-size: 20px; color: rgb(0, 125, 110); letter-spacing: 0.554px;">Server attributes</span>
<span class="t " style="left: 1391.2px; top: 674px; font-size: 20px; color: rgb(33, 33, 33); letter-spacing: 0.677px;">Client attributes</span>
<span class="t " style="left: 1391.2px; top: 734px; font-size: 20px; color: rgb(33, 33, 33); letter-spacing: 0.573px;">Shared attributes</span>
<svg style="left:1574.8px;top:622.7px;width:18px;height:28px" viewBox="0 0 18 28">
<path d="M6.600 1c-1 0-1.700.75-1.700 1.700v9.800l-1.400-1.500c-.7-.7-1.700-.75-2.350-.1-.6.65-.5 1.500 0 2.250l4.350 6.650h9.300l1.700-4.800v-6.100c0-.8-.6-1.350-1.350-1.350s-1.350.55-1.350 1.350v-1.100c0-.8-.6-1.350-1.400-1.350s-1.400.55-1.400 1.350v-.9c0-.8-.6-1.350-1.400-1.350s-1.400.55-1.400 1.350V2.700c0-.95-.7-1.700-1.600-1.700z" fill="#fff" stroke="#000" stroke-width="1.250"></path>
<path d="M8.300 8.800v3.400M11.100 9.500v2.900M13.900 10.500v2" stroke="#000" stroke-width="1.100" fill="none"></path>
<rect x="5.600" y="21.300" width="9.600" height="5.400" fill="#ffc733" stroke="#000" stroke-width="1.200"></rect>
<rect x="11.400" y="23.200" width="1.800" height="1.800" fill="#000"></rect></svg>
<svg style="left:1250px;top:461px;width:134px;height:36px" viewBox="0 0 134 36">
<defs><linearGradient id="ag479" x1="0" y1="0" x2="0" y2="1"><stop offset="0" stop-color="#ffd04f"></stop><stop offset="1" stop-color="#f9bf2c"></stop></linearGradient></defs>
<path d="M5.500 11.500H95.500V4.500L127.500 18L95.500 31.500V24.500H5.500z" fill="url(#ag479)" stroke="#3a3a3a" stroke-width="1" stroke-linejoin="miter"></path></svg>
<svg style="left:1250px;top:551px;width:134px;height:36px" viewBox="0 0 134 36">
<defs><linearGradient id="ag569" x1="0" y1="0" x2="0" y2="1"><stop offset="0" stop-color="#ffd04f"></stop><stop offset="1" stop-color="#f9bf2c"></stop></linearGradient></defs>
<path d="M5.500 11.500H95.500V4.500L127.500 18L95.500 31.500V24.500H5.500z" fill="url(#ag569)" stroke="#3a3a3a" stroke-width="1" stroke-linejoin="miter"></path></svg>
</body></html>
